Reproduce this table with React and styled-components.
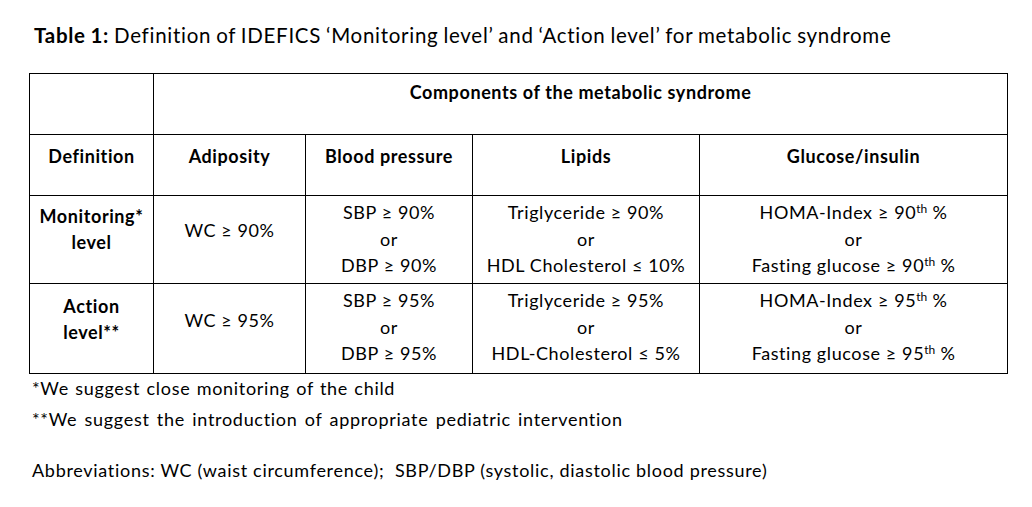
import React from "react";
import styled, { createGlobalStyle } from "styled-components";

const Global = createGlobalStyle`
  html, body { margin: 0; padding: 0; background: #fff; }
  body { font-family: Lato, "Open Sans", sans-serif; color: #000; }
`;

const Page = styled.div`
  width: 1032px;
  height: 507px;
  padding: 22px 0 0 29px;
  box-sizing: border-box;
`;

const Title = styled.h1`
  margin: 0 0 25px 5px;
  font-size: 20.5px;
  font-weight: 400;
  line-height: 26px;
  letter-spacing: 0.72px;
  word-spacing: -1px;
  b { font-weight: 700; }
`;

const Table = styled.table`
  border-collapse: collapse;
  table-layout: fixed;
  width: 978px;
  font-size: 18px;
  letter-spacing: 0.6px;
`;

const Row = styled.tr`
  height: ${(p) => p.$h}px;
`;

const Cell = styled.td`
  border: 1px solid #000;
  padding: ${(p) => p.$pad || "0"};
  text-align: center;
  vertical-align: top;
  font-weight: ${(p) => (p.$bold ? 700 : 400)};
  line-height: ${(p) => p.$lh || 26.5}px;
  white-space: nowrap;
`;

const Sup = styled.sup`
  font-size: 12px;
  line-height: 0;
  vertical-align: 6px;
  letter-spacing: 0;
`;

const Notes = styled.div`
  margin: -1px 0 0 3px;
  font-size: 18px;
  letter-spacing: 0.7px;
`;

const Note = styled.p`
  margin: 0 0 ${(p) => p.$gap || 0}px 0;
  line-height: 31px;
  word-spacing: ${(p) => p.$ws || 0}px;
`;

const rows = [
  {
    label: ["Monitoring*", "level"],
    wc: "WC ≥ 90%",
    bp: ["SBP ≥ 90%", "or", "DBP ≥ 90%"],
    lip: ["Triglyceride ≥ 90%", "or", "HDL Cholesterol  ≤ 10%"],
    glu: [["HOMA-Index ≥ 90", " %"], "or", ["Fasting glucose ≥ 90", " %"]],
    h: 88,
  },
  {
    label: ["Action", "level**"],
    wc: "WC ≥ 95%",
    bp: ["SBP ≥ 95%", "or", "DBP ≥ 95%"],
    lip: ["Triglyceride ≥ 95%", "or", "HDL-Cholesterol  ≤ 5%"],
    glu: [["HOMA-Index ≥ 95", " %"], "or", ["Fasting glucose ≥ 95", " %"]],
    h: 90,
  },
];

const Lines = ({ items }) =>
  items.map((t, i) => (
    <React.Fragment key={i}>
      {i > 0 && <br />}
      {Array.isArray(t) ? (
        <>
          {t[0]}
          <Sup>th</Sup>
          {t[1]}
        </>
      ) : (
        t
      )}
    </React.Fragment>
  ));

export default function App() {
  return (
    <>
      <Global />
      <Page>
        <Title>
          <b>Table 1:</b> Definition of IDEFICS ‘Monitoring level’ and ‘Action level’ for metabolic syndrome
        </Title>
        <Table>
          <colgroup>
            <col style={{ width: 124 }} />
            <col style={{ width: 152 }} />
            <col style={{ width: 167 }} />
            <col style={{ width: 227 }} />
            <col style={{ width: 308 }} />
          </colgroup>
          <tbody>
            <Row $h={61}>
              <Cell />
              <Cell colSpan={4} $bold $pad="5px 0 0 0">
                Components of the metabolic syndrome
              </Cell>
            </Row>
            <Row $h={61}>
              <Cell $bold $pad="8px 0 0 0">Definition</Cell>
              <Cell $bold $pad="8px 0 0 0">Adiposity</Cell>
              <Cell $bold $pad="8px 0 0 0">Blood pressure</Cell>
              <Cell $bold $pad="8px 0 0 0">Lipids</Cell>
              <Cell $bold $pad="8px 0 0 0">Glucose/insulin</Cell>
            </Row>
            {rows.map((r, i) => (
              <Row key={i} $h={r.h}>
                <Cell $bold $lh={26} $pad={i === 0 ? "7px 0 0 0" : "9px 0 0 0"}>
                  <Lines items={r.label} />
                </Cell>
                <Cell $pad={i === 0 ? "21px 0 0 0" : "23px 0 0 0"}>{r.wc}</Cell>
                <Cell $pad="3px 0 0 0">
                  <Lines items={r.bp} />
                </Cell>
                <Cell $pad="3px 0 0 0">
                  <Lines items={r.lip} />
                </Cell>
                <Cell $pad="3px 0 0 0">
                  <Lines items={r.glu} />
                </Cell>
              </Row>
            ))}
          </tbody>
        </Table>
        <Notes>
          <Note $ws={1}>*We suggest close monitoring of the child</Note>
          <Note $gap={20} $ws={2}>**We suggest the introduction of appropriate pediatric intervention</Note>
          <Note>Abbreviations: WC (waist circumference);&nbsp; SBP/DBP (systolic, diastolic blood pressure)</Note>
        </Notes>
      </Page>
    </>
  );
}
